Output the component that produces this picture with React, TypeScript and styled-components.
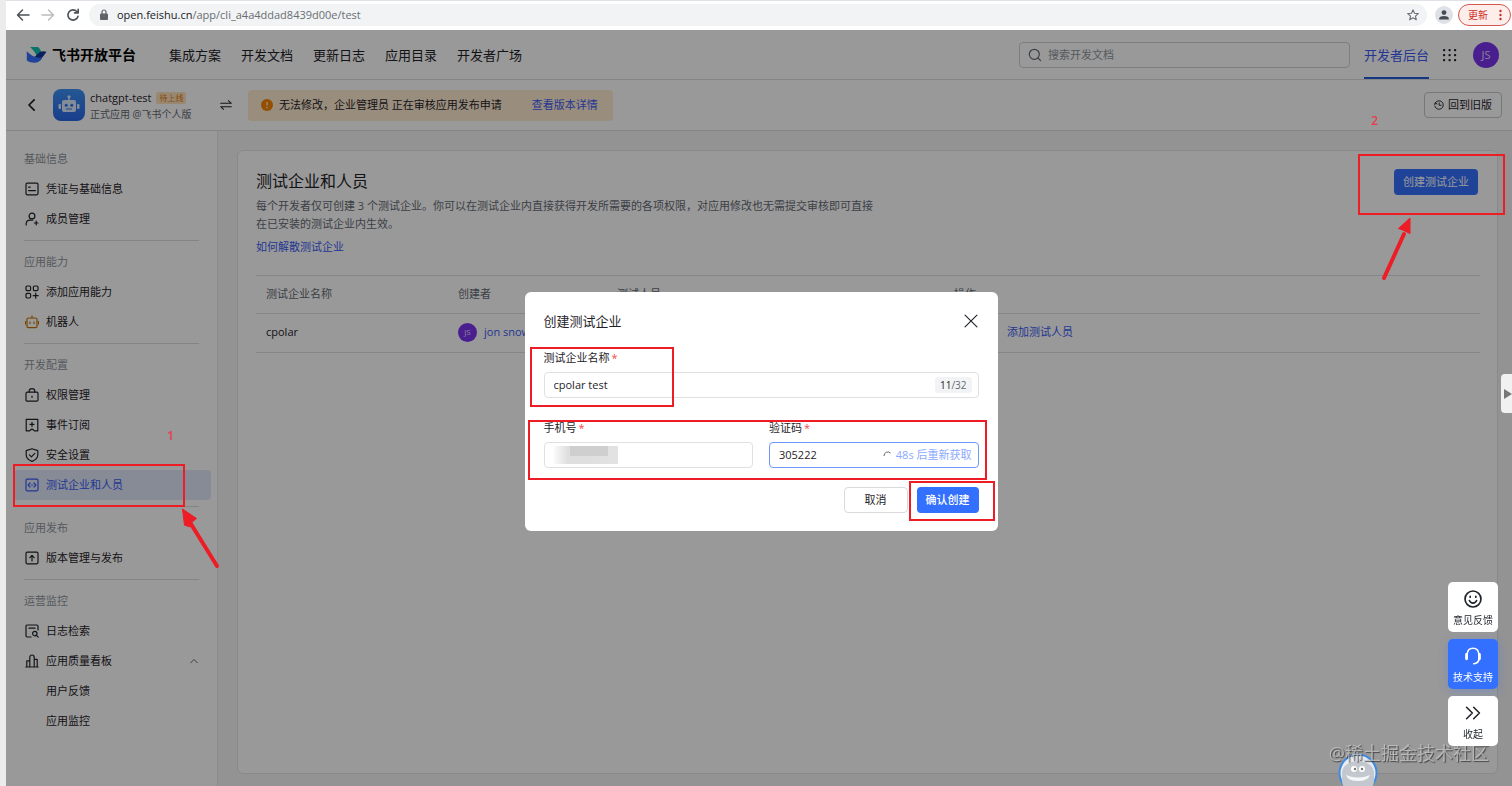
import React from "react";
import styled, { createGlobalStyle, css } from "styled-components";

const GlobalStyle = createGlobalStyle`
  *, *::before, *::after { box-sizing: border-box; }
  body {
    margin: 0;
    background: #ececec;
    color: #1f2329;
    font-family: "Open Sans", "Noto Sans CJK SC", sans-serif;
    font-size: 11px;
    line-height: 18px;
  }
  button, input { font: inherit; color: inherit; }
  button { cursor: pointer; }
  a { color: #3b5bf5; text-decoration: none; }
  h1, h2, p, ul { margin: 0; padding: 0; font-weight: 400; }
  ul { list-style: none; }
  svg { display: block; flex: none; }
`;

const Page = styled.div`
  display: flex;
  flex-direction: column;
  min-height: 100vh;
  padding-left: 6px;
`;

/* Browser toolbar */
const Toolbar = styled.div`
  display: flex;
  align-items: center;
  height: 30px;
  padding: 0 1px 2px 10px;
  background: #fff;
  border-top: 1px solid #dee1e6;
`;
const ToolButton = styled.button`
  display: flex;
  padding: 0;
  margin-right: 11px;
  border: 0;
  background: none;
  color: #4d5156;
  &:disabled { color: #bbbdc0; }
`;
const Address = styled.div`
  flex: 1;
  display: flex;
  align-items: center;
  gap: 8px;
  height: 22px;
  margin-left: -2px;
  padding: 0 8px 0 10px;
  border-radius: 11px;
  background: #f1f3f4;
  color: #6a6e73;
  font-size: 11px;
  b { font-weight: 400; color: #202124; }
  span { flex: 1; }
`;
const Profile = styled.div`
  display: flex;
  align-items: center;
  justify-content: center;
  width: 18px;
  height: 18px;
  margin: 0 5px 0 8px;
  border-radius: 50%;
  background: #dee1e6;
  color: #454a54;
`;
const UpdateButton = styled.button`
  display: flex;
  align-items: center;
  justify-content: space-between;
  width: 53px;
  height: 22px;
  padding: 0 8px 0 9px;
  border: 1px solid #d5574d;
  border-radius: 11px;
  background: #fdeeec;
  color: #cc2d24;
  font-size: 10px;
`;

/* Application */
const Application = styled.div`
  flex: 1;
  display: flex;
  flex-direction: column;
  background: #fff;
`;
const Header = styled.header`
  display: flex;
  align-items: center;
  height: 50px;
  padding: 0 13px 0 20px;
  border-bottom: 1px solid #dcdee1;
`;
const Brand = styled.div`
  display: flex;
  align-items: center;
  gap: 5px;
  margin-right: 33px;
  font-size: 14px;
  font-weight: 700;
  color: #000;
`;
const TopNav = styled.nav`
  flex: 1;
  display: flex;
  gap: 20px;
  font-size: 13px;
  a { color: #1f2329; }
`;
const Search = styled.label`
  display: flex;
  align-items: center;
  gap: 6px;
  width: 331px;
  height: 26px;
  padding: 0 8px;
  border: 1px solid #d0d3d6;
  border-radius: 4px;
  color: #646a73;
  input {
    flex: 1;
    min-width: 0;
    padding: 0;
    border: 0;
    outline: 0;
    background: none;
    &::placeholder { color: #8f959e; opacity: 1; }
  }
`;
const ConsoleLink = styled.a`
  align-self: stretch;
  display: flex;
  align-items: center;
  margin: 0 14px 0 14px;
  border-top: 2px solid transparent;
  border-bottom: 2px solid #245bdb;
  font-size: 13px;
`;
const Avatar = styled.span<{ $size: number }>`
  display: flex;
  align-items: center;
  justify-content: center;
  width: ${(p) => p.$size}px;
  height: ${(p) => p.$size}px;
  border-radius: 50%;
  background: #7a35f0;
  color: #e6d8ff;
  font-size: ${(p) => (p.$size > 20 ? 11 : 8)}px;
`;
const UserAvatar = styled(Avatar)`
  margin-left: 16px;
`;
const SubHeader = styled.div`
  display: flex;
  align-items: center;
  height: 51px;
  padding: 0 10px 0 20px;
  border-bottom: 1px solid #dcdee1;
`;
const IconButton = styled.button`
  display: flex;
  padding: 0;
  border: 0;
  background: none;
`;
const AppIcon = styled.div`
  display: flex;
  align-items: center;
  justify-content: center;
  width: 32px;
  height: 32px;
  margin: 0 5px 0 15px;
  border-radius: 8px;
  background: linear-gradient(180deg, #3d92f5, #2a68e8);
`;
const AppMeta = styled.div`
  width: 130px;
  p { font-size: 10px; line-height: 14px; color: #646a73; }
`;
const AppName = styled.div`
  display: flex;
  align-items: center;
  gap: 5px;
  line-height: 18px;
`;
const Tag = styled.span`
  padding: 0 3px;
  border-radius: 2px;
  background: #ffe3bd;
  color: #e07b10;
  font-size: 8px;
  line-height: 12px;
`;
const Notice = styled.div`
  display: flex;
  align-items: center;
  gap: 6px;
  height: 31px;
  margin: 0 auto 0 16px;
  padding: 0 15px 0 13px;
  border-radius: 4px;
  background: #ffecd2;
  a { margin-left: 24px; }
`;
const OutlineButton = styled.button`
  display: flex;
  align-items: center;
  gap: 4px;
  height: 26px;
  padding: 0 9px;
  border: 1px solid #c4c7cc;
  border-radius: 4px;
  background: none;
`;

const Body = styled.div`
  flex: 1;
  display: flex;
`;
const Sidebar = styled.aside`
  flex: none;
  width: 212px;
  padding: 13px 6px 0 8px;
  border-right: 1px solid #e6e8ea;
`;
const Section = styled.section`
  & + &::before {
    content: "";
    display: block;
    height: 1px;
    margin: 6px 12px 6px 10px;
    background: #dcdee1;
  }
`;
const SectionTitle = styled.h2`
  padding-left: 10px;
  font-size: 11px;
  line-height: 30px;
  color: #8f959e;
`;
const Item = styled.li`
  position: relative;
`;
const ItemLink = styled.a<{ $active?: boolean; $nested?: boolean }>`
  display: flex;
  align-items: center;
  gap: 7px;
  height: 30px;
  padding: 0 13px 0 ${(p) => (p.$nested ? 32 : 11)}px;
  border-radius: 4px;
  color: #1f2329;
  ${(p) => p.$active && css`
    background: #dfe8fb;
    color: #3b5bf5;
  `}
  span { flex: 1; }
`;
const Main = styled.main`
  flex: 1;
  display: flex;
  padding: 19px 14px 12px 19px;
  background: #f5f6f7;
`;
const Panel = styled.div`
  flex: 1;
  padding: 16px 17px 20px 18px;
  border: 1px solid #e3e5e8;
  border-radius: 6px;
  background: #fff;
`;
const PanelTop = styled.div`
  display: flex;
  justify-content: space-between;
  align-items: flex-start;
  h1 { font-size: 16px; line-height: 28px; }
  p { max-width: 622px; margin: 2px 0 5px; color: #646a73; }
`;
const Anchor = styled.div`
  position: relative;
  display: flex;
`;
const PrimaryButton = styled.button<{ $strong?: boolean }>`
  height: 26px;
  padding: 0 9px;
  border: 0;
  border-radius: 4px;
  background: #3370ff;
  color: #fff;
  font-weight: ${(p) => (p.$strong ? 500 : 400)};
`;
const CreateAnchor = styled(Anchor)`
  margin: 2px 2px 0 0;
`;
const Table = styled.table`
  width: 100%;
  margin-top: 19px;
  border-collapse: collapse;
  table-layout: fixed;
  border-top: 1px solid #dee0e3;
  th, td {
    height: 39px;
    padding: 0 10px 2px;
    border-bottom: 1px solid #dee0e3;
    text-align: left;
    font-weight: 400;
  }
  th { height: 38px; color: #646a73; }
  th:nth-child(1) { width: 192px; }
  th:nth-child(2) { width: 159px; }
  th:nth-child(3) { width: 337px; }
  td:last-child { padding-left: 63px; }
`;
const Person = styled.a`
  display: flex;
  align-items: center;
  gap: 7px;
`;

/* Dialog */
const Mask = styled.div`
  position: fixed;
  inset: 30px 0 0 6px;
  z-index: 1;
  display: flex;
  align-items: center;
  justify-content: center;
  padding: 7px 0 0 4px;
  background: rgba(0, 0, 0, 0.4);
`;
const Dialog = styled.form`
  display: flex;
  flex-direction: column;
  gap: 20px;
  width: 473px;
  padding: 18px 19px;
  border-radius: 6px;
  background: #fff;
`;
const DialogTop = styled.div`
  display: flex;
  align-items: center;
  justify-content: space-between;
  margin-bottom: -4px;
  h2 { font-size: 13px; line-height: 22px; }
`;
const FieldRow = styled.div`
  position: relative;
  display: flex;
  gap: 16px;
`;
const Field = styled.div`
  flex: 1;
  min-width: 0;
  label {
    display: block;
    margin-bottom: 4px;
    line-height: 20px;
  }
  i { margin-left: 2px; color: #f54a45; font-style: normal; }
`;
const InputBox = styled.div<{ $focus?: boolean }>`
  display: flex;
  align-items: center;
  height: 26px;
  padding: 0 6px 0 9px;
  border: 1px solid ${(p) => (p.$focus ? "#6f97ff" : "#dee0e3")};
  border-radius: 4px;
  input {
    flex: 1;
    min-width: 0;
    padding: 0;
    border: 0;
    outline: 0;
    background: none;
  }
`;
const Counter = styled.span`
  padding: 0 5px;
  border-radius: 3px;
  background: #f2f3f5;
  font-size: 10px;
  line-height: 16px;
  em { font-style: normal; color: #646a73; }
`;
const Resend = styled.span`
  display: flex;
  align-items: center;
  gap: 4px;
  color: #8ba9ff;
`;
const Redaction = styled.div`
  width: 64px;
  height: 18px;
  background:
    linear-gradient(#cfcfcf, #cfcfcf) 16px 0 / 38px 10px no-repeat,
    linear-gradient(90deg, #fafafa, #dedede 14px, #e2e2e2);
`;
const Actions = styled.div`
  display: flex;
  justify-content: flex-end;
  gap: 9px;
  margin-top: -1px;
`;
const CancelButton = styled(OutlineButton)`
  justify-content: center;
  width: 64px;
  border-color: #d8dadd;
`;

/* Hand-drawn marks over the page */
const Frame = styled.div<{ $inset: string }>`
  position: absolute;
  inset: ${(p) => p.$inset};
  z-index: 3;
  border: 2px solid #ee1c25;
  pointer-events: none;
`;
const Arrow = styled.svg<{ $left: number; $top: number }>`
  position: absolute;
  left: ${(p) => p.$left}px;
  top: ${(p) => p.$top}px;
  z-index: 3;
  pointer-events: none;
`;
const Step = styled.span<{ $left: number; $top: number }>`
  position: absolute;
  left: ${(p) => p.$left}px;
  top: ${(p) => p.$top}px;
  z-index: 3;
  color: #f0364a;
  font-size: 12px;
  font-weight: 600;
`;

/* Floating tools */
const Dock = styled.div`
  position: fixed;
  right: 14px;
  bottom: 40px;
  z-index: 5;
  display: flex;
  flex-direction: column;
  gap: 7px;
`;
const DockButton = styled.button<{ $primary?: boolean }>`
  display: flex;
  flex-direction: column;
  align-items: center;
  justify-content: center;
  gap: 4px;
  width: 50px;
  height: 50px;
  padding: 4px 0 0;
  border: 0;
  border-radius: 5px;
  background: ${(p) => (p.$primary ? "#3370ff" : "#fff")};
  color: ${(p) => (p.$primary ? "#fff" : "#1f2329")};
  box-shadow: ${(p) => (p.$primary ? "0 2px 10px rgba(51, 112, 255, 0.3)" : "none")};
  font-size: 10px;
  line-height: 16px;
`;
const SideHandle = styled.button`
  position: fixed;
  right: 0;
  top: 374px;
  z-index: 2;
  display: flex;
  align-items: center;
  justify-content: flex-end;
  width: 11px;
  height: 39px;
  padding: 0;
  border: 0;
  border-radius: 4px 0 0 4px;
  background: #f1f1f1;
  color: #777;
`;
const Mascot = styled.div`
  position: fixed;
  right: 134px;
  bottom: -7px;
  z-index: 2;
`;
const Watermark = styled.div`
  position: fixed;
  right: 23px;
  bottom: 20px;
  z-index: 4;
  color: rgba(200, 200, 200, 0.75);
  font-size: 18px;
  line-height: 26px;
  text-shadow: 1px 1px 1px rgba(50, 50, 50, 0.8);
`;

const Line: React.FC<{ size?: number; width?: number; children: React.ReactNode }> = ({ size = 14, width = 1.2, children }) => (
  <svg width={size} height={size} viewBox="0 0 14 14" fill="none" stroke="currentColor" strokeWidth={width} strokeLinejoin="round" strokeLinecap="round" aria-hidden="true">
    {children}
  </svg>
);

const icons = {
  card: <Line><rect x="1" y="1.2" width="12" height="11.6" rx="1.2" /><path d="M3.6 5.2h1.6M3.6 8.6h6.8" /></Line>,
  member: <Line><circle cx="7" cy="4" r="2.9" /><path d="M1.2 13v-1.2c0-2.4 1.6-3.7 4-3.7h2.6M11.2 9.2v3.6M9.4 11h3.6" /></Line>,
  add: <Line><rect x="1" y="1" width="4.6" height="4.6" rx="1.2" /><rect x="8.4" y="1" width="4.6" height="4.6" rx="1.2" /><rect x="1" y="8.4" width="4.6" height="4.6" rx="1.2" /><path d="M10.7 8.2v5M8.2 10.7h5" /></Line>,
  bot: <svg width="14" height="14" viewBox="0 0 14 14" fill="none" stroke="#c87400" strokeWidth="1.2" strokeLinecap="round" aria-hidden="true"><rect x="2" y="3" width="10" height="9.6" rx="1.4" /><path d="M7 .8V3M.5 6.5v2.6M13.5 6.5v2.6M5 7.2v1.2M9 7.2v1.2" /></svg>,
  lock: <Line><rect x="1" y="4.2" width="12" height="9" rx="1.2" /><path d="M4.2 4.2V3a2.8 2.4 0 0 1 5.6 0v1.2M7 8v1.4" /></Line>,
  event: <Line><path d="M1.2 1.4h11.6v11.4H9.4L7 11l-2.4 1.8H1.2zM7 4.4v4M5 6.4h4" /></Line>,
  shield: <Line><path d="M7 .8l5.8 1.8v4.2c0 3.2-2.6 5.4-5.8 6.6C3.8 12.2 1.2 10 1.2 6.8V2.6zM4.4 6.8l2 2 3.4-3.4" /></Line>,
  code: <Line><rect x="1" y="1.2" width="12" height="11.6" rx="1.2" /><path d="M5 5L3.2 7 5 9M9 5l1.8 2L9 9M7 6.5v1" /></Line>,
  publish: <Line><rect x="1" y="1.2" width="12" height="11.6" rx="1.2" /><path d="M7 10V4.6M4.8 6.6L7 4.4l2.2 2.2" /></Line>,
  log: <Line><path d="M6 13H2.2A1.2 1.2 0 0 1 1 11.8V2.2A1.2 1.2 0 0 1 2.2 1h9.6A1.2 1.2 0 0 1 13 2.2V6M4 4.2h6" /><circle cx="9.8" cy="9.6" r="2.2" /><path d="M11.4 11.3L13.2 13.2" /></Line>,
  chart: <Line><path d="M.8 13h12.4M1.8 13V6.8h3V13M4.8 13V3.2a2.2 2.2 0 0 1 4.4 0V13M9.2 5.4h3V13" /></Line>,
};

type Entry = { label: string; icon?: React.ReactNode; active?: boolean; open?: boolean; nested?: boolean };
const menu: { title: string; items: Entry[] }[] = [
  { title: "基础信息", items: [{ label: "凭证与基础信息", icon: icons.card }, { label: "成员管理", icon: icons.member }] },
  { title: "应用能力", items: [{ label: "添加应用能力", icon: icons.add }, { label: "机器人", icon: icons.bot }] },
  {
    title: "开发配置",
    items: [
      { label: "权限管理", icon: icons.lock },
      { label: "事件订阅", icon: icons.event },
      { label: "安全设置", icon: icons.shield },
      { label: "测试企业和人员", icon: icons.code, active: true },
    ],
  },
  { title: "应用发布", items: [{ label: "版本管理与发布", icon: icons.publish }] },
  {
    title: "运营监控",
    items: [
      { label: "日志检索", icon: icons.log },
      { label: "应用质量看板", icon: icons.chart, open: true },
      { label: "用户反馈", nested: true },
      { label: "应用监控", nested: true },
    ],
  },
];

const BrowserBar = () => (
  <Toolbar>
    <ToolButton aria-label="后退"><Line width={1.5}><path d="M13 7H1.5M6.5 2L1.5 7l5 5" /></Line></ToolButton>
    <ToolButton aria-label="前进" disabled><Line width={1.5}><path d="M1 7h11.5M7.5 2l5 5-5 5" /></Line></ToolButton>
    <ToolButton aria-label="刷新"><Line width={1.6}><path d="M12 8.2A5.1 5.1 0 1 1 10.8 3.5L12 4.7M12.2 1.3v3.6H8.6" /></Line></ToolButton>
    <Address>
      <svg width="10" height="12" viewBox="0 0 10 12" aria-hidden="true">
        <rect x="1" y="4.5" width="8" height="6.5" rx="1" fill="#5f6368" />
        <path d="M3 5V3a2 2 0 0 1 4 0v2" fill="none" stroke="#5f6368" strokeWidth="1.2" />
      </svg>
      <span><b>open.feishu.cn</b>/app/cli_a4a4ddad8439d00e/test</span>
      <Line size={12} width={1.3}><path d="M7 1l1.8 4 4.4.4-3.3 2.9 1 4.3L7 10.3l-3.9 2.3 1-4.3L.8 5.4 5.2 5z" /></Line>
    </Address>
    <Profile>
      <svg width="12" height="12" viewBox="0 0 12 12" fill="currentColor" aria-hidden="true"><circle cx="6" cy="3.6" r="2.4" /><path d="M1.2 10.6V9.4C1.2 7.8 4 7 6 7s4.800.8 4.800 2.400v1.200z" /></svg>
    </Profile>
    <UpdateButton>
      更新
      <svg width="3" height="12" viewBox="0 0 3 12" fill="currentColor" aria-hidden="true"><circle cx="1.5" cy="2" r="1.2" /><circle cx="1.5" cy="6" r="1.2" /><circle cx="1.5" cy="10" r="1.2" /></svg>
    </UpdateButton>
  </Toolbar>
);

const AppHeader = () => (
  <Header>
    <Brand>
      <svg width="21" height="18" viewBox="0 0 21 18" aria-hidden="true">
        <path d="M4 1h8c1.8 1.4 2.9 3.3 3.3 5.4l-4.5 3.8C9.2 6.5 7 3.5 4 1z" fill="#10c4b0" />
        <path d="M20.5 5.8c-3-1.2-6.2-.6-8.3 1.6L8.5 11c3.6 2.4 7.6 1.8 9.3-1.4z" fill="#14369c" />
        <path d="M.8 5.2c3.6 3.7 8.8 7 15.6 6.6-1.8 3.4-4.6 5-8 5-2.8 0-5.4-.8-7.6-2.2z" fill="#3370ff" />
      </svg>
      飞书开放平台
    </Brand>
    <TopNav>
      {["集成方案", "开发文档", "更新日志", "应用目录", "开发者广场"].map((t) => <a href="#" key={t}>{t}</a>)}
    </TopNav>
    <Search>
      <Line><circle cx="6.3" cy="6.3" r="5" /><path d="M10 10l2.6 2.6" /></Line>
      <input placeholder="搜索开发文档" aria-label="搜索开发文档" />
    </Search>
    <ConsoleLink href="#">开发者后台</ConsoleLink>
    <IconButton aria-label="更多应用">
      <svg width="14" height="14" viewBox="0 0 14 14" fill="#1f2329" aria-hidden="true">
        {[1, 6, 11].map((y) => [0, 5.5, 11].map((x) => <rect key={`${x}-${y}`} x={x} y={y} width="2.2" height="2.2" rx=".8" />))}
      </svg>
    </IconButton>
    <UserAvatar $size={26}>JS</UserAvatar>
  </Header>
);

const AppBar = () => (
  <SubHeader>
    <IconButton aria-label="返回"><Line size={12} width={2}><path d="M9.5 1L3.5 7l6 6" /></Line></IconButton>
    <AppIcon>
      <svg width="22" height="20" viewBox="0 0 22 20" aria-hidden="true">
        <g fill="#dceaff">
          <rect x="4" y="5" width="14" height="12" rx="2" /><rect x=".5" y="9" width="2.5" height="5" rx="1" /><rect x="19" y="9" width="2.5" height="5" rx="1" />
          <rect x="10.3" y="2" width="1.4" height="4" /><circle cx="11" cy="1.8" r="1.6" />
        </g>
        <circle cx="8.2" cy="10.2" r="1.5" fill="#2f74ee" /><circle cx="13.8" cy="10.2" r="1.5" fill="#2f74ee" />
        <path d="M8 14h6" stroke="#2f74ee" />
      </svg>
    </AppIcon>
    <AppMeta>
      <AppName>chatgpt-test <Tag>待上线</Tag></AppName>
      <p>正式应用 @飞书个人版</p>
    </AppMeta>
    <IconButton aria-label="切换应用"><Line size={12}><path d="M.8 5h12.4L9.8 2M13.2 9H.8l3.4 3" /></Line></IconButton>
    <Notice>
      <svg width="12" height="12" viewBox="0 0 12 12" aria-hidden="true"><circle cx="6" cy="6" r="6" fill="#f58300" /><path d="M6 3v3.6M6 8v1.2" stroke="#ffecd2" strokeWidth="1.4" /></svg>
      无法修改，企业管理员 正在审核应用发布申请
      <a href="#">查看版本详情</a>
    </Notice>
    <OutlineButton>
      <Line size={10} width={1.3}><path d="M1.5 4.5A6 6 0 1 1 1.3 9M1 7l.6-3 2.6 1.6M7.2 4v3.4H10" /></Line>
      回到旧版
    </OutlineButton>
  </SubHeader>
);

const SideMenu = () => (
  <Sidebar>
    {menu.map((s) => (
      <Section key={s.title}>
        <SectionTitle>{s.title}</SectionTitle>
        <ul>
          {s.items.map((it) => (
            <Item key={it.label}>
              <ItemLink href="#" $active={it.active} $nested={it.nested}>
                {it.icon}
                <span>{it.label}</span>
                {it.open && <svg width="8" height="6" viewBox="0 0 8 6" fill="none" stroke="#646a73" aria-hidden="true"><path d="M.5 5L4 1.5 7.500 5" /></svg>}
              </ItemLink>
              {it.active && (
                <>
                  <Frame $inset="-6px 26px -7px -1px" />
                  <Step $left={153} $top={-43}>1</Step>
                  <Arrow $left={167} $top={38} width="40" height="62" viewBox="0 0 40 62" aria-hidden="true">
                    <path d="M36 58L10 16" stroke="#ee1c25" strokeWidth="4" strokeLinecap="round" />
                    <path d="M1.500 1l14 9.500-4.200 3.300-2 5.200-5.800-1.800z" fill="#ee1c25" stroke="#ee1c25" />
                  </Arrow>
                </>
              )}
            </Item>
          ))}
        </ul>
      </Section>
    ))}
  </Sidebar>
);

const Companies = () => (
  <Main>
    <Panel>
      <PanelTop>
        <div>
          <h1>测试企业和人员</h1>
          <p>每个开发者仅可创建 3 个测试企业。你可以在测试企业内直接获得开发所需要的各项权限，对应用修改也无需提交审核即可直接在已安装的测试企业内生效。</p>
          <a href="#">如何解散测试企业</a>
        </div>
        <CreateAnchor>
          <PrimaryButton>创建测试企业</PrimaryButton>
          <Frame $inset="-15px -27px -20px -36px" />
          <Step $left={-23} $top={-57}>2</Step>
          <Arrow $left={-14} $top={48} width="36" height="66" viewBox="0 0 36 66" aria-hidden="true">
            <path d="M4 61L24 17" stroke="#ee1c25" strokeWidth="4" strokeLinecap="round" />
            <path d="M30 1L18.500 11.500l4 1.500 7.500 3.500z" fill="#ee1c25" stroke="#ee1c25" />
          </Arrow>
        </CreateAnchor>
      </PanelTop>
      <Table>
        <thead>
          <tr><th>测试企业名称</th><th>创建者</th><th>测试人员</th><th>操作</th></tr>
        </thead>
        <tbody>
          <tr>
            <td>cpolar</td>
            <td><Person href="#"><Avatar $size={19}>JS</Avatar>jon snow</Person></td>
            <td />
            <td><a href="#">添加测试人员</a></td>
          </tr>
        </tbody>
      </Table>
    </Panel>
  </Main>
);

const CreateDialog = () => (
  <Mask>
    <Dialog role="dialog" aria-labelledby="dialog-title" onSubmit={(e) => e.preventDefault()}>
      <DialogTop>
        <h2 id="dialog-title">创建测试企业</h2>
        <IconButton type="button" aria-label="关闭"><Line size={16} width={1}><path d="M1.800 1.800l10.400 10.400M12.200 1.800L1.800 12.200" /></Line></IconButton>
      </DialogTop>
      <FieldRow>
        <Field>
          <label htmlFor="company">测试企业名称<i>*</i></label>
          <InputBox>
            <input id="company" defaultValue="cpolar test" />
            <Counter>11<em>/32</em></Counter>
          </InputBox>
        </Field>
        <Frame $inset="-1px 305px -9px -14px" />
      </FieldRow>
      <FieldRow>
        <Field>
          <label htmlFor="phone">手机号<i>*</i></label>
          <InputBox><Redaction /><input id="phone" type="tel" /></InputBox>
        </Field>
        <Field>
          <label htmlFor="code">验证码<i>*</i></label>
          <InputBox $focus>
            <input id="code" defaultValue="305222" />
            <Resend>
              <svg width="9" height="9" viewBox="0 0 9 9" fill="none" stroke="#646a73" aria-hidden="true"><path d="M1 5a3.800 3.800 0 0 1 6.600-2.800" /></svg>
              48s 后重新获取
            </Resend>
          </InputBox>
        </Field>
        <Frame $inset="2px -8px -12px -16px" />
      </FieldRow>
      <Actions>
        <CancelButton type="button">取消</CancelButton>
        <Anchor>
          <PrimaryButton type="submit" $strong>确认创建</PrimaryButton>
          <Frame $inset="-6px -16px -8px -8px" />
        </Anchor>
      </Actions>
    </Dialog>
  </Mask>
);

export default function App() {
  return (
    <Page>
      <GlobalStyle />
      <BrowserBar />
      <Application>
        <AppHeader />
        <AppBar />
        <Body>
          <SideMenu />
          <Companies />
        </Body>
      </Application>
      <CreateDialog />
      <SideHandle aria-label="展开侧栏"><svg width="8" height="10" viewBox="0 0 8 10" fill="currentColor" aria-hidden="true"><path d="M0 0l8 5-8 5z" /></svg></SideHandle>
      <Dock>
        <DockButton>
          <Line size={18} width={1.3}><circle cx="7" cy="7" r="6.200" /><path d="M4.200 8.200c.6 1.400 1.600 2 2.800 2s2.200-.6 2.800-2M4.800 5v.6M9.200 5v.6" /></Line>
          意见反馈
        </DockButton>
        <DockButton $primary>
          <Line size={18} width={1.3}><path d="M2.400 5.800C2.600 2.800 4.400 1 7 1s4.400 1.800 4.600 4.800v3.400c0 2-1.400 3.600-4 3.800" /><path d="M2 5.800v3.400M12 5.800v3.400" strokeWidth="2.200" /></Line>
          技术支持
        </DockButton>
        <DockButton>
          <Line size={18} width={1.2}><path d="M2 2.500L6.500 7 2 11.500M7.500 2.500L12 7l-4.500 4.500" /></Line>
          收起
        </DockButton>
      </Dock>
      <Mascot>
        <svg width="40" height="40" viewBox="0 0 40 40" aria-hidden="true">
          <circle cx="20" cy="20" r="18.500" fill="#e9edf2" stroke="#3f8ae0" strokeWidth="2" />
          <path d="M4 20a16 12 0 0 1 32 0v8a16 12 0 0 1-32 0z" fill="#c3c8ce" />
          <path d="M8 22q12 5 24 0-2 6-12 6T8 22z" fill="#f4f6f8" />
          <circle cx="16" cy="16" r="3" fill="#fff" /><circle cx="24" cy="16" r="3" fill="#fff" />
          <circle cx="17" cy="16" r="1.200" fill="#777" /><circle cx="24" cy="16" r="1.200" fill="#777" />
        </svg>
      </Mascot>
      <Watermark>@稀土掘金技术社区</Watermark>
    </Page>
  );
}
